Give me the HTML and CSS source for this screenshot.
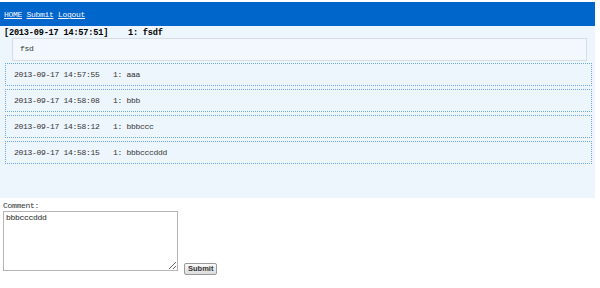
FILE: index.html
```html
<!DOCTYPE html>
<html lang="en">
<head>
<meta charset="utf-8">
  <title>Comments</title>
  <link rel="stylesheet" href="styles.css">
</head>
<body>

  <div class="top">
    <a href="#">HOME</a> <a href="#">Submit</a> <a href="#">Logout</a>
  </div>

  <div class="main">
    <div class="titulo">[2013-09-17 14:57:51]&nbsp;&nbsp;&nbsp;&nbsp;1: fsdf</div>
    <div class="primero">fsd</div>

    <div class="fila">2013-09-17 14:57:55&nbsp;&nbsp;&nbsp;1: aaa</div>
    <div class="fila">2013-09-17 14:58:08&nbsp;&nbsp;&nbsp;1: bbb</div>
    <div class="fila">2013-09-17 14:58:12&nbsp;&nbsp;&nbsp;1: bbbccc</div>
    <div class="fila">2013-09-17 14:58:15&nbsp;&nbsp;&nbsp;1: bbbcccddd</div>
  </div>

  <form class="form">
    <div class="label">Comment:</div>
    <div class="linea">
      <textarea>bbbcccddd</textarea>
      <button type="button">Submit</button>
    </div>
  </form>

</body>
</html>
```

FILE: styles.css
```css
* {
  margin: 0;
  padding: 0;
  box-sizing: border-box;
}

body {
  background: #ffffff;
  font-family: "Liberation Mono", "DejaVu Sans Mono", monospace;
  font-size: 8px;
  letter-spacing: -0.3px;
  color: #333333;
}

.top {
  width: 595px;
  height: 24px;
  margin-top: 2px;
  padding: 8px 0 0 4px;
  background: #0066cc;
  line-height: 10px;
}

.top a {
  color: #f4f8fc;
}

.main {
  width: 595px;
  height: 172px;
  padding-top: 2px;
  background: #eef6fd;
}

.titulo {
  height: 10px;
  padding-left: 4px;
  line-height: 10px;
  font-size: 8.6px;
  letter-spacing: -0.2px;
  font-weight: bold;
  color: #000000;
}

.primero {
  height: 23px;
  margin: 0 8px 0 12px;
  padding-left: 7px;
  border: 1px solid #d8dee5;
  background: #f2f8fd;
  line-height: 20px;
}

.fila {
  height: 23px;
  margin: 2px 3px 0 5px;
  padding-left: 8px;
  border: 1px dotted #6fa6de;
  line-height: 21px;
}

.fila + .fila {
  margin-top: 3px;
}

.form {
  padding: 3px 0 0 3px;
}

.label {
  height: 10px;
  line-height: 10px;
}

.linea {
  display: flex;
  align-items: flex-start;
  gap: 6px;
}

textarea {
  width: 175px;
  height: 60px;
  padding: 1px 2px;
  border: 1px solid #b5b5b5;
  font-family: "Liberation Mono", "DejaVu Sans Mono", monospace;
  font-size: 8px;
  letter-spacing: -0.3px;
  line-height: 9px;
  color: #222222;
}

button {
  height: 12px;
  margin-top: 52px;
  padding: 0 3px;
  border: 1px solid #9a9a9a;
  border-radius: 2px;
  background: linear-gradient(#fafafa, #dcdcdc);
  font-family: "Liberation Sans", Arial, sans-serif;
  font-size: 7.5px;
  font-weight: bold;
  color: #333333;
  line-height: 10px;
}
```
